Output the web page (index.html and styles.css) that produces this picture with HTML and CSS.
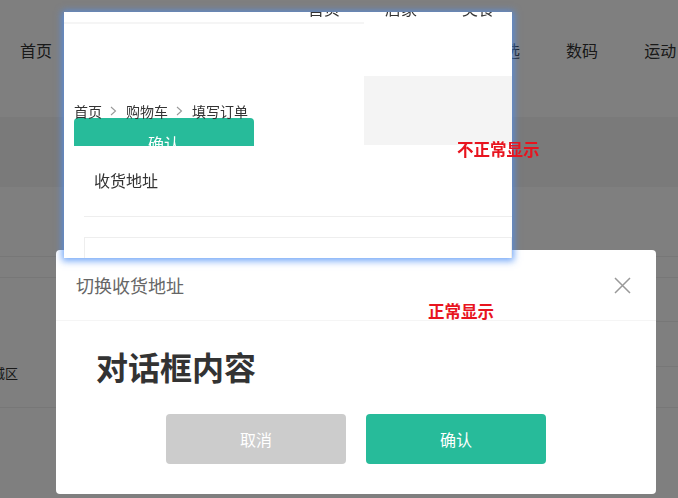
FILE: index.html
```html
<!DOCTYPE html>
<html lang="zh-CN">

<head>
    <meta charset="UTF-8">
    <meta name="viewport" content="width=device-width, initial-scale=1.0">
    <title>切换收货地址</title>
    <link rel="stylesheet" href="styles.css">
</head>

<body>
    <!-- page behind the mask -->
    <div class="page">
        <div class="nav">
            <a href="#">首页</a>
            <a href="#">居家</a>
            <a href="#">美食</a>
            <a href="#">服饰</a>
            <a href="#">母婴</a>
            <a href="#">个护</a>
            <a href="#">严选</a>
            <a href="#">数码</a>
            <a href="#">运动</a>
        </div>
        <div class="band"></div>
        <div class="row row-tall"></div>
        <div class="row row-thin"></div>
        <div class="row row-list">
            <div class="cell-left">
                <span class="addr-tail">东城区</span>
            </div>
            <div class="cell-right">
                <div class="sub sub-1"></div>
                <div class="sub sub-2"></div>
            </div>
        </div>
    </div>

    <div class="mask"></div>

    <!-- broken dialog -->
    <div class="dialog-bad">
        <div class="bad-inner">
            <div class="bad-nav">
                <span>首页</span>
                <span>居家</span>
                <span>美食</span>
            </div>
            <div class="bad-line"></div>
            <div class="bad-main">
                <div class="bad-left">
                    <div class="crumb">
                        <span>首页</span>
                        <i class="chev"><svg width="7" height="10" viewBox="0 0 7 10"><path d="M1 1l4.5 4-4.5 4" fill="none" stroke="#999" stroke-width="1.1"/></svg></i>
                        <span>购物车</span>
                        <i class="chev"><svg width="7" height="10" viewBox="0 0 7 10"><path d="M1 1l4.5 4-4.5 4" fill="none" stroke="#999" stroke-width="1.1"/></svg></i>
                        <span>填写订单</span>
                    </div>
                    <div class="bad-btn">确认</div>
                </div>
                <div class="bad-box"></div>
            </div>
            <div class="bad-addr">
                <div class="bad-title">收货地址</div>
                <div class="bad-sep"></div>
                <div class="bad-card"></div>
            </div>
        </div>
    </div>

    <!-- normal dialog -->
    <div class="dialog">
        <div class="dialog-header">
            <h3>切换收货地址</h3>
            <a class="close" href="#">
                <svg width="17" height="17" viewBox="0 0 17 17"><path d="M1 1l15 15M16 1L1 16" stroke="#999" stroke-width="1.5" fill="none"/></svg>
            </a>
        </div>
        <div class="dialog-body">
            <h2>对话框内容</h2>
        </div>
        <div class="dialog-footer">
            <button class="btn btn-gray">取消</button>
            <button class="btn btn-green">确认</button>
        </div>
    </div>

    <div class="note note-bad">不正常显示</div>
    <div class="note note-ok">正常显示</div>
</body>

</html>
```

FILE: styles.css
```css
* {
    margin: 0;
    padding: 0;
    box-sizing: border-box;
    font-family: "Noto Sans CJK SC", "Microsoft YaHei", sans-serif;
}

body {
    width: 678px;
    height: 498px;
    overflow: hidden;
    background-color: #fff;
    color: #333;
}

/* background page */
.nav {
    height: 117px;
    padding: 38px 0 0 20px;
    display: flex;
    gap: 46px;
    white-space: nowrap;
}

.nav a {
    font-size: 16px;
    line-height: 24px;
    color: #333;
    text-decoration: none;
}

.band {
    height: 70px;
    background-color: #f5f5f5;
}

.row {
    border-bottom: 1px solid #eee;
}

.row-tall {
    height: 70px;
}

.row-thin {
    height: 21px;
}

.row-list {
    height: 130px;
    display: flex;
    justify-content: space-between;
}

.cell-left {
    width: 56px;
    padding-top: 81px;
    overflow: hidden;
    white-space: nowrap;
}

.addr-tail {
    display: inline-block;
    margin-left: -21px;
    font-size: 13px;
    line-height: 16px;
    color: #333;
}

.cell-right {
    width: 300px;
}

.sub {
    border-bottom: 1px solid #eee;
}

.sub-1 {
    height: 44px;
}

.sub-2 {
    height: 45px;
}

.mask {
    position: fixed;
    top: 0;
    left: 0;
    right: 0;
    bottom: 0;
    background-color: rgba(0, 0, 0, 0.5);
    z-index: 1;
}

/* broken dialog */
.dialog-bad {
    position: absolute;
    top: 12px;
    left: 64px;
    width: 448px;
    height: 246px;
    background-color: #fff;
    overflow: hidden;
    box-shadow: 0 1px 7px 2px rgba(80, 145, 245, 0.8);
    z-index: 3;
}

.bad-inner {
    margin-top: -13px;
}

.bad-nav {
    height: 23px;
    padding-left: 244px;
    display: flex;
    gap: 45px;
    white-space: nowrap;
}

.bad-nav span {
    font-size: 16px;
    line-height: 18px;
    color: #333;
}

.bad-line {
    width: 300px;
    height: 2px;
    background-color: #f5f5f5;
}

.bad-main {
    display: flex;
    justify-content: space-between;
}

.bad-left {
    padding: 80px 0 0 10px;
}

.crumb {
    display: flex;
    align-items: center;
    font-size: 14px;
    line-height: 14px;
    color: #333;
    white-space: nowrap;
}

.chev {
    display: flex;
    margin: 0 9px 0 8px;
}

.bad-btn {
    width: 180px;
    height: 28px;
    padding-top: 17px;
    overflow: hidden;
    background-color: #27bb9a;
    border-radius: 4px 4px 0 0;
    color: #fff;
    font-size: 16px;
    line-height: 16px;
    text-align: center;
}

.bad-box {
    width: 148px;
    height: 69px;
    margin-top: 52px;
    background-color: #f4f4f4;
}

.bad-addr {
    padding: 26px 0 0 20px;
}

.bad-title {
    padding-left: 10px;
    font-size: 16px;
    line-height: 16px;
    color: #333;
}

.bad-sep {
    margin-top: 28px;
    border-top: 1px solid #eee;
}

.bad-card {
    margin-top: 20px;
    height: 60px;
    border: 1px solid #eee;
}

/* normal dialog */
.dialog {
    position: absolute;
    top: 250px;
    left: 56px;
    width: 600px;
    height: 244px;
    background-color: #fff;
    border-radius: 4px;
    z-index: 2;
}

.dialog-header {
    height: 71px;
    padding: 0 25px 0 20px;
    display: flex;
    align-items: center;
    justify-content: space-between;
    border-bottom: 1px solid #f5f5f5;
}

.dialog-header h3 {
    font-size: 18px;
    font-weight: normal;
    color: #666;
}

.close {
    display: flex;
}

.dialog-body {
    padding: 29px 0 0 40px;
}

.dialog-body h2 {
    font-size: 32px;
    line-height: 32px;
    font-weight: bold;
    color: #333;
}

.dialog-footer {
    margin-top: 32px;
    display: flex;
    justify-content: center;
    gap: 20px;
}

.btn {
    width: 180px;
    height: 50px;
    border: none;
    border-radius: 4px;
    color: #fff;
    font-size: 16px;
    cursor: pointer;
}

.btn-gray {
    background-color: #ccc;
}

.btn-green {
    background-color: #27bb9a;
}

/* red notes */
.note {
    position: absolute;
    color: #e8141e;
    font-size: 16.5px;
    font-weight: bold;
    line-height: 18px;
    z-index: 4;
}

.note-bad {
    top: 140px;
    left: 457px;
}

.note-ok {
    top: 302px;
    left: 428px;
}
```
